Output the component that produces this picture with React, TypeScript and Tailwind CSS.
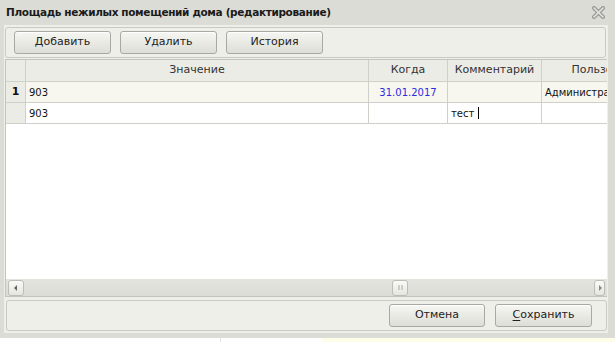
import React from 'react';

const font = { fontFamily: '"DejaVu Sans", Verdana, sans-serif' };

function Btn({ children, className = '' }: { children: React.ReactNode; className?: string }) {
  return (
    <div
      className={`flex h-[23px] items-center justify-center rounded-[3px] border border-[#a9a9a3] bg-gradient-to-b from-[#f6f6f2] to-[#dedeD8] text-[11px] text-[#222] shadow-[inset_0_1px_0_#fff] ${className}`}
    >
      {children}
    </div>
  );
}

function CloseIcon() {
  return (
    <svg width="13" height="13" viewBox="0 0 13 13" aria-hidden="true">
      <path d="M2 2 L11 11 M11 2 L2 11" stroke="#9a9a96" strokeWidth="4" strokeLinecap="round" />
      <path d="M2 2 L11 11 M11 2 L2 11" stroke="#e4e4e0" strokeWidth="1.6" strokeLinecap="round" />
    </svg>
  );
}

function ScrollBtn({ dir, className = '' }: { dir: 'l' | 'r' | 'm'; className?: string }) {
  return (
    <div
      className={`flex h-[16px] items-center justify-center rounded-[3px] border border-[#bdbdb7] bg-gradient-to-b from-[#fafaf7] to-[#e6e6e0] ${className}`}
    >
      {dir === 'l' && (
        <svg width="4" height="6" viewBox="0 0 4 6">
          <path d="M3 0 L0 3 L3 6 Z" fill="#666" />
        </svg>
      )}
      {dir === 'r' && (
        <svg width="4" height="6" viewBox="0 0 4 6">
          <path d="M1 0 L4 3 L1 6 Z" fill="#888" />
        </svg>
      )}
      {dir === 'm' && (
        <svg width="5" height="5" viewBox="0 0 5 5">
          <path d="M1 0 V5 M4 0 V5" stroke="#aaa" strokeWidth="1" />
        </svg>
      )}
    </div>
  );
}

// row no. | Значение | Когда | Комментарий | Пользователь (runs past the right edge)
const cols = 'grid-cols-[20px_343px_79px_94px_140px]';

export default function App() {
  return (
    <div className="relative h-[342px] w-[615px] overflow-hidden bg-[#dcdcd6]" style={font}>
      {/* title bar */}
      <div className="flex h-[25px] items-center justify-between pl-[6px] pr-[10px]">
        <span className="text-[10.5px] font-bold tracking-[-0.35px] text-[#1a1a1a]">
          Площадь нежилых помещений дома (редактирование)
        </span>
        <CloseIcon />
      </div>

      {/* body */}
      <div className="mx-[4px] flex h-[308px] w-[604px] flex-col bg-[#efefea] pt-[2px]">
        {/* toolbar */}
        <div className="ml-[1px] flex h-[31px] w-[601px] items-center gap-[9px] rounded-[3px] border border-[#cacac4] pl-[8px]">
          <Btn className="w-[97px]">Добавить</Btn>
          <Btn className="w-[97px]">Удалить</Btn>
          <Btn className="w-[97px]">История</Btn>
        </div>

        {/* grid */}
        <div className="ml-[1px] mt-[1px] flex h-[238px] w-[602px] flex-col overflow-hidden border-l border-t border-[#c4c4be] bg-white">
          <div className="flex-1 overflow-hidden">
            <div className={`grid ${cols} h-[22px] w-[676px] bg-[#ececE6] text-[11px] text-[#333]`}>
              <div className="border-b border-r border-[#d0d0ca]" />
              <div className="flex items-center justify-center border-b border-r border-[#d0d0ca]">Значение</div>
              <div className="flex items-center justify-center border-b border-r border-[#d0d0ca]">Когда</div>
              <div className="flex items-center justify-center border-b border-r border-[#d0d0ca]">Комментарий</div>
              <div className="flex items-center justify-center whitespace-nowrap border-b border-[#d0d0ca]">Пользователь</div>
            </div>
            <div className={`grid ${cols} h-[21px] w-[676px] bg-[#f7f7f0] text-[10px] text-[#111]`}>
              <div className="flex items-center justify-center border-b border-r border-[#d0d0ca] bg-[#ececE6] text-[11px] font-bold">1</div>
              <div className="flex items-center border-b border-r border-[#d0d0ca] pl-[3px]">903</div>
              <div className="flex items-center justify-center border-b border-r border-[#d0d0ca] text-[#2a2ae0]">31.01.2017</div>
              <div className="border-b border-r border-[#d0d0ca]" />
              <div className="flex items-center whitespace-nowrap border-b border-[#d0d0ca] pl-[3px]">Администратор</div>
            </div>
            <div className={`grid ${cols} h-[21px] w-[676px] bg-white text-[10px] text-[#111]`}>
              <div className="border-b border-r border-[#d0d0ca] bg-[#ececE6]" />
              <div className="flex items-center border-b border-r border-[#d0d0ca] pl-[3px]">903</div>
              <div className="border-b border-r border-[#d0d0ca]" />
              <div className="flex items-center border-b border-r border-[#d0d0ca] pl-[3px]">
                тест<span className="ml-[4px] inline-block h-[12px] w-px bg-black" />
              </div>
              <div className="border-b border-[#d0d0ca]" />
            </div>
          </div>
          {/* horizontal scrollbar */}
          <div className="flex h-[18px] items-center border-b border-[#c4c4be] bg-gradient-to-b from-[#e4e4de] to-[#dcdcd6] px-[2px]">
            <ScrollBtn dir="l" className="w-[16px]" />
            <div className="flex flex-1 justify-start pl-[368px]">
              <ScrollBtn dir="m" className="w-[16px]" />
            </div>
            <ScrollBtn dir="r" className="w-[11px]" />
          </div>
        </div>

        {/* footer */}
        <div className="ml-[2px] mt-[3px] flex h-[31px] w-[601px] items-center justify-end gap-[10px] rounded-[3px] border border-[#cacac4] pr-[14px]">
          <Btn className="w-[96px]">Отмена</Btn>
          <Btn className="w-[97px]">
            <span className="underline underline-offset-2">С</span>охранить
          </Btn>
        </div>
      </div>

      {/* strip under the dialog */}
      <div className="absolute bottom-0 left-0 flex h-[4px] w-[615px]">
        <div className="w-[221px] border-r border-[#e4e4e4] bg-white" />
        <div className="w-[100px] bg-white" />
        <div className="flex-1 bg-[#fefee8]" />
      </div>
    </div>
  );
}
